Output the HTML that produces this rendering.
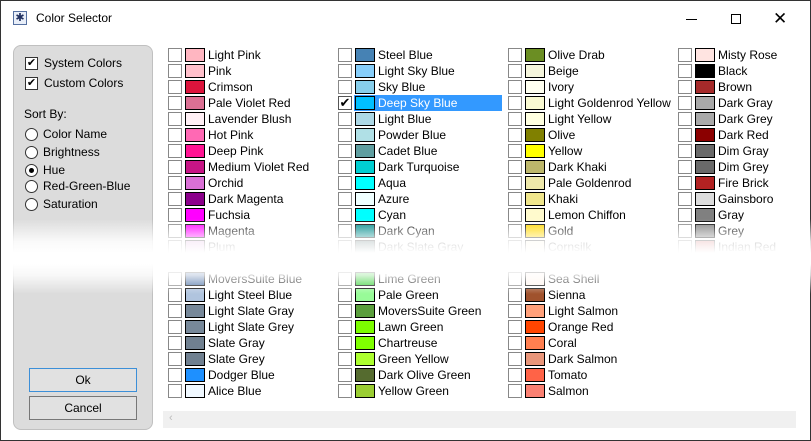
<!DOCTYPE html>
<html><head><meta charset="utf-8"><style>
*{box-sizing:border-box;margin:0;padding:0}
body{width:811px;height:441px;overflow:hidden;background:#fff;font-family:"Liberation Sans",sans-serif;font-size:12px;color:#000;position:relative}
.win{position:absolute;left:0;top:0;width:811px;height:441px;border:1px solid #333}
.t{position:absolute;left:35px;top:10px;font-size:12px}
.ic{position:absolute;left:12px;top:10px;width:14px;height:14px;border:1px solid #5570a0;background:#e8eef8;color:#203060;font-size:11px;line-height:12px;text-align:center}
.lp{position:absolute;left:12px;top:44px;width:140px;height:385px;background:#dcdcdc;border:1px solid #c0c0c0;border-radius:8px}
.cb{position:absolute;width:13px;height:13px;border:1px solid #333;background:#fff;font-size:11px;line-height:11px;text-align:center}
.rd{position:absolute;width:13px;height:13px;border:1px solid #333;border-radius:50%;background:#fff}
.lb{position:absolute;font-size:12px}
.btn{position:absolute;left:28px;width:108px;height:24px;border:1px solid #777;background:#e1e1e1;text-align:center;line-height:22px}
.r{position:absolute;height:16px;width:168px}
.r i{position:absolute;left:0;top:1px;width:14px;height:14px;border:1px solid #888;background:#fff}
.r b{position:absolute;left:17px;top:1px;width:20px;height:14px;border:1px solid #000}
.r span{position:absolute;left:40px;top:0;line-height:16px;font-size:12px;white-space:nowrap;color:#000}
.sel span{color:#fff}
.hl{position:absolute;left:353px;top:94px;width:148px;height:16px;background:#3399ff}
.fade{position:absolute;left:1px;width:809px;top:218px;height:75px;background:linear-gradient(to bottom,rgba(255,255,255,0) 0%,rgba(255,255,255,0.85) 30%,#fff 45%,#fff 60%,rgba(255,255,255,0.8) 75%,rgba(255,255,255,0) 100%)}
.sb{position:absolute;left:162px;top:410px;width:633px;height:17px;background:#f0f0f0}
</style></head><body><div class="win">
<div class="ic">✱</div><div class="t">Color Selector</div>
<div style="position:absolute;left:685px;top:18px;width:11px;height:1px;background:#000"></div>
<div style="position:absolute;left:730px;top:13px;width:10px;height:10px;border:1px solid #000"></div>
<div style="position:absolute;left:772px;top:8px;font-size:17px;line-height:20px">✕</div>
<div class="lp"></div>
<div class="cb" style="left:24px;top:56px">✔</div><div class="lb" style="left:43px;top:55px">System Colors</div>
<div class="cb" style="left:24px;top:76px">✔</div><div class="lb" style="left:43px;top:75px">Custom Colors</div>
<div class="lb" style="left:23px;top:106px">Sort By:</div>
<div class="rd" style="left:24px;top:127px"></div><div class="lb" style="left:42px;top:126px">Color Name</div>
<div class="rd" style="left:24px;top:145px"></div><div class="lb" style="left:42px;top:144px">Brightness</div>
<div class="rd" style="left:24px;top:163px"><div style="position:absolute;left:3px;top:3px;width:5px;height:5px;border-radius:50%;background:#000"></div></div><div class="lb" style="left:42px;top:162px">Hue</div>
<div class="rd" style="left:24px;top:179px"></div><div class="lb" style="left:42px;top:178px">Red-Green-Blue</div>
<div class="rd" style="left:24px;top:197px"></div><div class="lb" style="left:42px;top:196px">Saturation</div>
<div class="btn" style="top:367px;border-color:#3c8fd8">Ok</div>
<div class="btn" style="top:395px">Cancel</div>
<div class="hl"></div>

<div class="r" style="left:167px;top:46px"><i></i><b style="background:#ffb6c1"></b><span>Light Pink</span></div>
<div class="r" style="left:167px;top:62px"><i></i><b style="background:#ffc0cb"></b><span>Pink</span></div>
<div class="r" style="left:167px;top:78px"><i></i><b style="background:#dc143c"></b><span>Crimson</span></div>
<div class="r" style="left:167px;top:94px"><i></i><b style="background:#db7093"></b><span>Pale Violet Red</span></div>
<div class="r" style="left:167px;top:110px"><i></i><b style="background:#fff0f5"></b><span>Lavender Blush</span></div>
<div class="r" style="left:167px;top:126px"><i></i><b style="background:#ff69b4"></b><span>Hot Pink</span></div>
<div class="r" style="left:167px;top:142px"><i></i><b style="background:#ff1493"></b><span>Deep Pink</span></div>
<div class="r" style="left:167px;top:158px"><i></i><b style="background:#c71585"></b><span>Medium Violet Red</span></div>
<div class="r" style="left:167px;top:174px"><i></i><b style="background:#da70d6"></b><span>Orchid</span></div>
<div class="r" style="left:167px;top:190px"><i></i><b style="background:#8b008b"></b><span>Dark Magenta</span></div>
<div class="r" style="left:167px;top:206px"><i></i><b style="background:#ff00ff"></b><span>Fuchsia</span></div>
<div class="r" style="left:167px;top:222px"><i></i><b style="background:#ff00ff"></b><span>Magenta</span></div>
<div class="r" style="left:167px;top:238px"><i></i><b style="background:#dda0dd"></b><span>Plum</span></div>
<div class="r" style="left:167px;top:270px"><i></i><b style="background:#4a6fa5"></b><span>MoversSuite Blue</span></div>
<div class="r" style="left:167px;top:286px"><i></i><b style="background:#b0c4de"></b><span>Light Steel Blue</span></div>
<div class="r" style="left:167px;top:302px"><i></i><b style="background:#778899"></b><span>Light Slate Gray</span></div>
<div class="r" style="left:167px;top:318px"><i></i><b style="background:#778899"></b><span>Light Slate Grey</span></div>
<div class="r" style="left:167px;top:334px"><i></i><b style="background:#708090"></b><span>Slate Gray</span></div>
<div class="r" style="left:167px;top:350px"><i></i><b style="background:#708090"></b><span>Slate Grey</span></div>
<div class="r" style="left:167px;top:366px"><i></i><b style="background:#1e90ff"></b><span>Dodger Blue</span></div>
<div class="r" style="left:167px;top:382px"><i></i><b style="background:#f0f8ff"></b><span>Alice Blue</span></div>

<div class="r" style="left:337px;top:46px"><i></i><b style="background:#4682b4"></b><span>Steel Blue</span></div>
<div class="r" style="left:337px;top:62px"><i></i><b style="background:#87cefa"></b><span>Light Sky Blue</span></div>
<div class="r" style="left:337px;top:78px"><i></i><b style="background:#87ceeb"></b><span>Sky Blue</span></div>
<div class="r sel" style="left:337px;top:94px"><i style="border-color:#555;font-style:normal;font-size:13px;line-height:11px;text-align:center">✔</i><b style="background:#00bfff"></b><span>Deep Sky Blue</span></div>
<div class="r" style="left:337px;top:110px"><i></i><b style="background:#add8e6"></b><span>Light Blue</span></div>
<div class="r" style="left:337px;top:126px"><i></i><b style="background:#b0e0e6"></b><span>Powder Blue</span></div>
<div class="r" style="left:337px;top:142px"><i></i><b style="background:#5f9ea0"></b><span>Cadet Blue</span></div>
<div class="r" style="left:337px;top:158px"><i></i><b style="background:#00ced1"></b><span>Dark Turquoise</span></div>
<div class="r" style="left:337px;top:174px"><i></i><b style="background:#00ffff"></b><span>Aqua</span></div>
<div class="r" style="left:337px;top:190px"><i></i><b style="background:#f0ffff"></b><span>Azure</span></div>
<div class="r" style="left:337px;top:206px"><i></i><b style="background:#00ffff"></b><span>Cyan</span></div>
<div class="r" style="left:337px;top:222px"><i></i><b style="background:#008b8b"></b><span>Dark Cyan</span></div>
<div class="r" style="left:337px;top:238px"><i></i><b style="background:#2f4f4f"></b><span>Dark Slate Gray</span></div>
<div class="r" style="left:337px;top:270px"><i></i><b style="background:#32cd32"></b><span>Lime Green</span></div>
<div class="r" style="left:337px;top:286px"><i></i><b style="background:#98fb98"></b><span>Pale Green</span></div>
<div class="r" style="left:337px;top:302px"><i></i><b style="background:#5a9e3c"></b><span>MoversSuite Green</span></div>
<div class="r" style="left:337px;top:318px"><i></i><b style="background:#7cfc00"></b><span>Lawn Green</span></div>
<div class="r" style="left:337px;top:334px"><i></i><b style="background:#7fff00"></b><span>Chartreuse</span></div>
<div class="r" style="left:337px;top:350px"><i></i><b style="background:#adff2f"></b><span>Green Yellow</span></div>
<div class="r" style="left:337px;top:366px"><i></i><b style="background:#556b2f"></b><span>Dark Olive Green</span></div>
<div class="r" style="left:337px;top:382px"><i></i><b style="background:#9acd32"></b><span>Yellow Green</span></div>

<div class="r" style="left:507px;top:46px"><i></i><b style="background:#6b8e23"></b><span>Olive Drab</span></div>
<div class="r" style="left:507px;top:62px"><i></i><b style="background:#f5f5dc"></b><span>Beige</span></div>
<div class="r" style="left:507px;top:78px"><i></i><b style="background:#fffff0"></b><span>Ivory</span></div>
<div class="r" style="left:507px;top:94px"><i></i><b style="background:#fafad2"></b><span>Light Goldenrod Yellow</span></div>
<div class="r" style="left:507px;top:110px"><i></i><b style="background:#ffffe0"></b><span>Light Yellow</span></div>
<div class="r" style="left:507px;top:126px"><i></i><b style="background:#808000"></b><span>Olive</span></div>
<div class="r" style="left:507px;top:142px"><i></i><b style="background:#ffff00"></b><span>Yellow</span></div>
<div class="r" style="left:507px;top:158px"><i></i><b style="background:#bdb76b"></b><span>Dark Khaki</span></div>
<div class="r" style="left:507px;top:174px"><i></i><b style="background:#eee8aa"></b><span>Pale Goldenrod</span></div>
<div class="r" style="left:507px;top:190px"><i></i><b style="background:#f0e68c"></b><span>Khaki</span></div>
<div class="r" style="left:507px;top:206px"><i></i><b style="background:#fffacd"></b><span>Lemon Chiffon</span></div>
<div class="r" style="left:507px;top:222px"><i></i><b style="background:#ffd700"></b><span>Gold</span></div>
<div class="r" style="left:507px;top:238px"><i></i><b style="background:#fff8dc"></b><span>Cornsilk</span></div>
<div class="r" style="left:507px;top:270px"><i></i><b style="background:#fff5ee"></b><span>Sea Shell</span></div>
<div class="r" style="left:507px;top:286px"><i></i><b style="background:#a0522d"></b><span>Sienna</span></div>
<div class="r" style="left:507px;top:302px"><i></i><b style="background:#ffa07a"></b><span>Light Salmon</span></div>
<div class="r" style="left:507px;top:318px"><i></i><b style="background:#ff4500"></b><span>Orange Red</span></div>
<div class="r" style="left:507px;top:334px"><i></i><b style="background:#ff7f50"></b><span>Coral</span></div>
<div class="r" style="left:507px;top:350px"><i></i><b style="background:#e9967a"></b><span>Dark Salmon</span></div>
<div class="r" style="left:507px;top:366px"><i></i><b style="background:#ff6347"></b><span>Tomato</span></div>
<div class="r" style="left:507px;top:382px"><i></i><b style="background:#fa8072"></b><span>Salmon</span></div>

<div class="r" style="left:677px;top:46px"><i></i><b style="background:#ffe4e1"></b><span>Misty Rose</span></div>
<div class="r" style="left:677px;top:62px"><i></i><b style="background:#000"></b><span>Black</span></div>
<div class="r" style="left:677px;top:78px"><i></i><b style="background:#a52a2a"></b><span>Brown</span></div>
<div class="r" style="left:677px;top:94px"><i></i><b style="background:#a9a9a9"></b><span>Dark Gray</span></div>
<div class="r" style="left:677px;top:110px"><i></i><b style="background:#a9a9a9"></b><span>Dark Grey</span></div>
<div class="r" style="left:677px;top:126px"><i></i><b style="background:#8b0000"></b><span>Dark Red</span></div>
<div class="r" style="left:677px;top:142px"><i></i><b style="background:#696969"></b><span>Dim Gray</span></div>
<div class="r" style="left:677px;top:158px"><i></i><b style="background:#696969"></b><span>Dim Grey</span></div>
<div class="r" style="left:677px;top:174px"><i></i><b style="background:#b22222"></b><span>Fire Brick</span></div>
<div class="r" style="left:677px;top:190px"><i></i><b style="background:#dcdcdc"></b><span>Gainsboro</span></div>
<div class="r" style="left:677px;top:206px"><i></i><b style="background:#808080"></b><span>Gray</span></div>
<div class="r" style="left:677px;top:222px"><i></i><b style="background:#808080"></b><span>Grey</span></div>
<div class="r" style="left:677px;top:238px"><i></i><b style="background:#cd5c5c"></b><span>Indian Red</span></div>

<div class="fade"></div>
<div class="sb"><span style="position:absolute;left:6px;top:1px;color:#bbb;font-size:11px">‹</span></div>
</div></body></html>
